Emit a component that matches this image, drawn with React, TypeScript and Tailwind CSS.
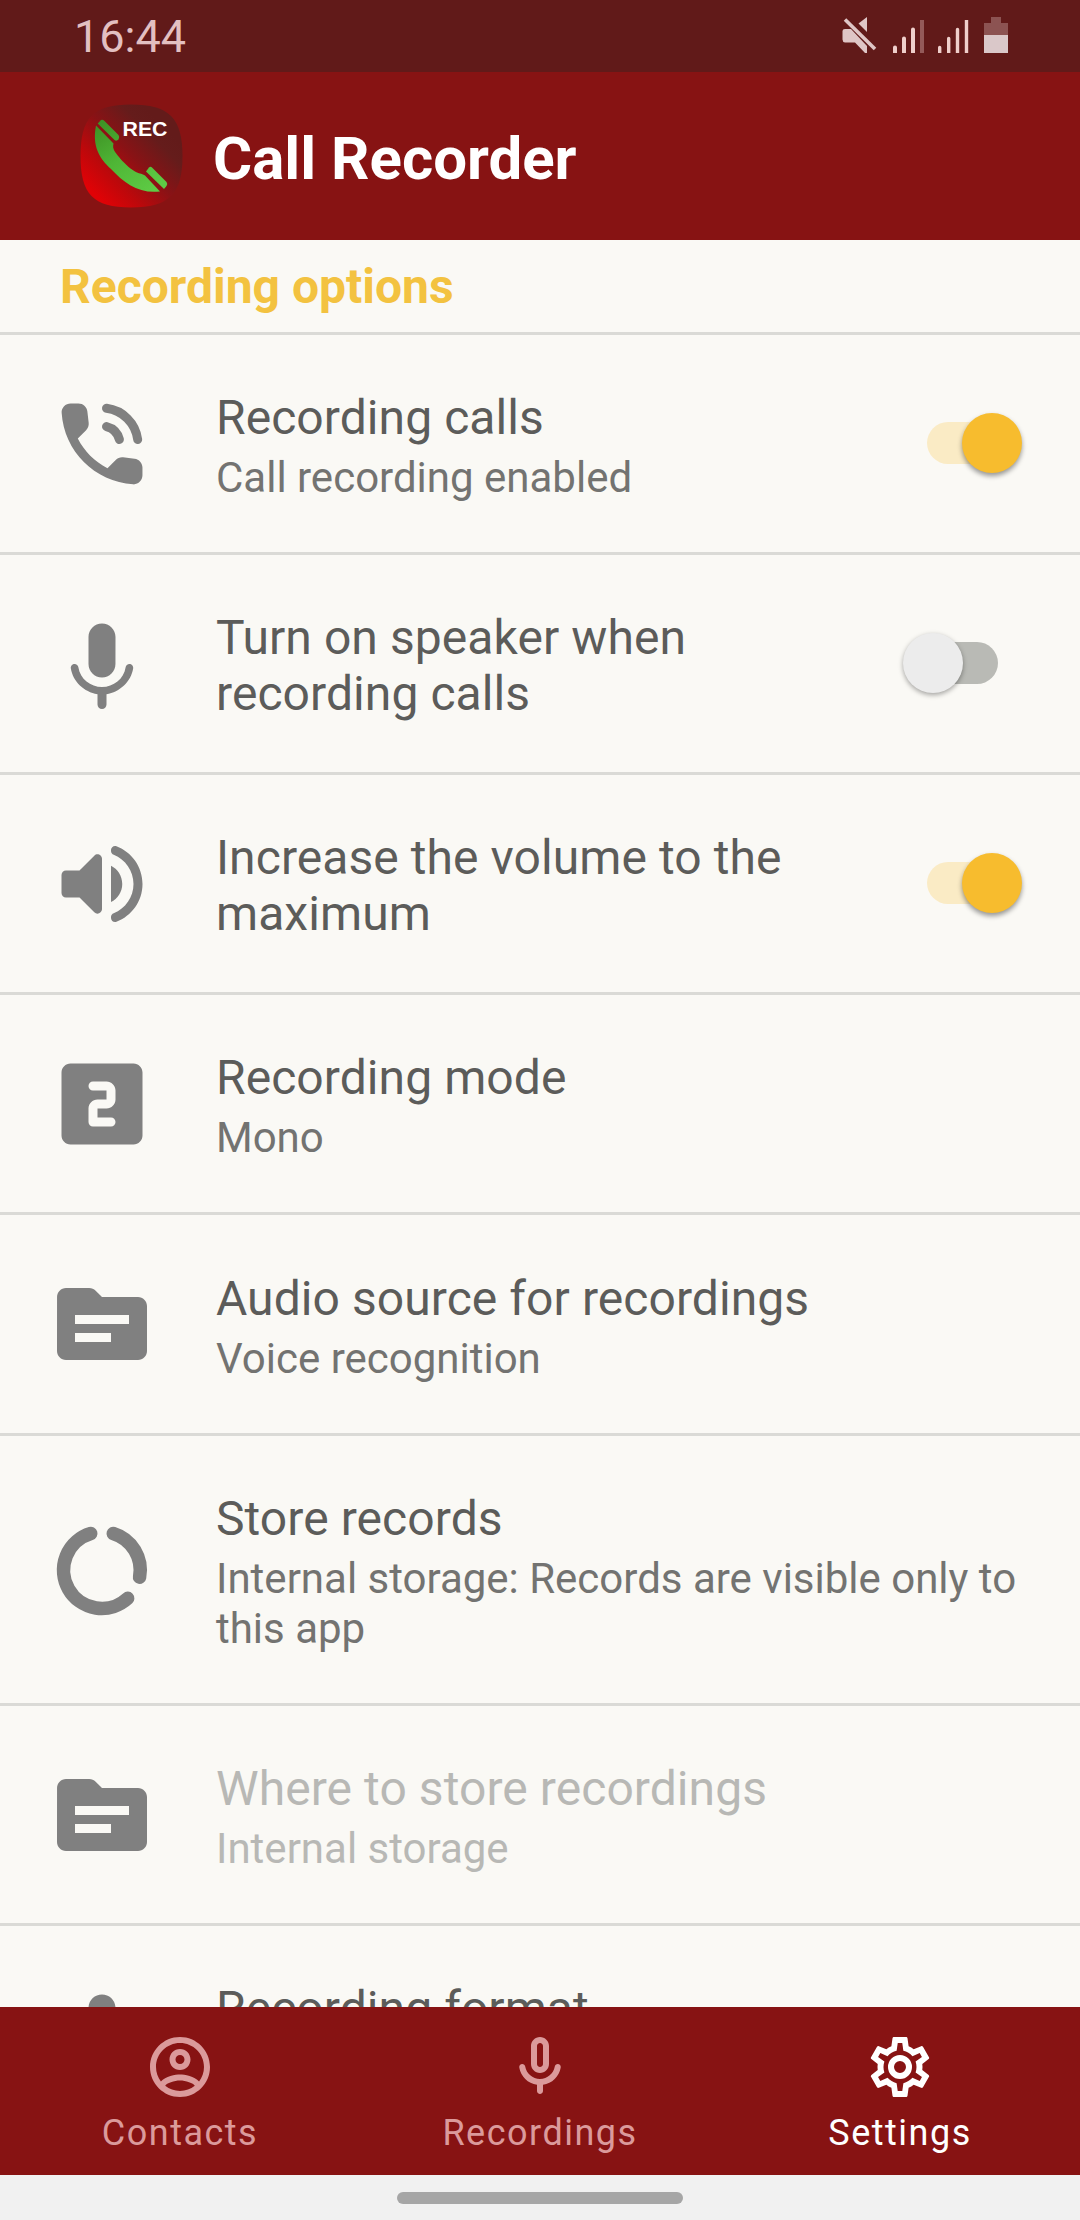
import React from "react";

type IconProps = { className?: string };

const GREY = "#808080";

function Glyph({ d, children }: { d?: string; children?: React.ReactNode }) {
  return (
    <svg viewBox="0 0 24 24" className="h-[108px] w-[108px]" fill={GREY}>
      {d && <path d={d} />}
      {children}
    </svg>
  );
}

const PhoneIcon = () => (
  <Glyph d="M19.23 15.26l-2.54-.29c-.61-.07-1.21.14-1.64.57l-1.84 1.84c-2.83-1.44-5.15-3.75-6.59-6.59l1.85-1.85c.43-.43.64-1.03.57-1.64l-.29-2.52c-.12-1.01-.97-1.77-1.99-1.77H5.03c-1.13 0-2.07.94-2 2.07.53 8.54 7.36 15.36 15.89 15.89 1.13.07 2.07-.87 2.07-2v-1.73c.01-1.01-.75-1.86-1.76-1.98z">
    <g fill="none" stroke={GREY} strokeWidth="2" strokeLinecap="round">
      <path d="M13 4.07A8 8 0 0 1 19.93 11" />
      <path d="M13 8.13A4 4 0 0 1 15.87 11" />
    </g>
  </Glyph>
);

const MicIcon = () => (
  <Glyph d="M12 15c1.66 0 2.99-1.34 2.99-3L15 6c0-1.66-1.34-3-3-3S9 4.34 9 6v6c0 1.66 1.34 3 3 3zm6.08-3c-.42 0-.77.3-.83.71-.37 2.61-2.72 4.39-5.25 4.39s-4.88-1.77-5.25-4.39c-.06-.41-.41-.71-.83-.71-.52 0-.92.46-.85.97.46 2.97 2.96 5.3 5.93 5.75V21c0 .55.45 1 1 1s1-.45 1-1v-2.28c2.96-.43 5.47-2.78 5.93-5.75.07-.51-.33-.97-.85-.97z" />
);

const VolumeIcon = () => (
  <Glyph d="M3 10v4c0 .55.45 1 1 1h3l3.29 3.29c.63.63 1.71.18 1.71-.71V6.41c0-.89-1.08-1.34-1.71-.71L7 9H4c-.55 0-1 .45-1 1zm13.5 2c0-1.77-1.02-3.29-2.5-4.03v8.05c1.48-.73 2.5-2.25 2.5-4.02zM14 4.45v.2c0 .38.25.71.6.85C17.18 6.53 19 9.06 19 12s-1.82 5.47-4.4 6.5c-.36.14-.6.47-.6.85v.2c0 .63.63 1.07 1.21.85C18.6 19.11 21 15.84 21 12s-2.4-7.11-5.79-8.4c-.58-.23-1.21.22-1.21.85z" />
);

const TwoIcon = () => (
  <Glyph d="M19 3H5c-1.1 0-2 .9-2 2v14c0 1.1.9 2 2 2h14c1.1 0 2-.9 2-2V5c0-1.1-.9-2-2-2zm-4 8c0 1.11-.9 2-2 2h-2v2h3c.55 0 1 .45 1 1s-.45 1-1 1h-4c-.55 0-1-.45-1-1v-3c0-1.11.9-2 2-2h2V9h-3c-.55 0-1-.45-1-1s.45-1 1-1h3c1.1 0 2 .89 2 2v2z" />
);

const FolderIcon = () => (
  <Glyph d="M20 6h-8l-1.41-1.41C10.21 4.21 9.7 4 9.17 4H4c-1.1 0-1.99.9-1.99 2L2 18c0 1.1.9 2 2 2h16c1.1 0 2-.9 2-2V8c0-1.1-.9-2-2-2zm-6 10H6v-2h8v2zm4-4H6v-2h12v2z" />
);

const UsageIcon = () => (
  <Glyph>
    <g fill="none" stroke={GREY} strokeWidth="3" strokeLinecap="round">
      <path d="M14.5 3.9A8.5 8.5 0 0 1 20.35 13.6" />
      <path d="M9.5 3.9A8.5 8.5 0 1 0 17.7 18.3" />
    </g>
  </Glyph>
);

function ContactIcon({ className }: IconProps) {
  return (
    <svg viewBox="0 0 24 24" className={className} fill="currentColor" fillRule="evenodd">
      <path d="M7.07 18.28C7.5 17.38 10.12 16.5 12 16.5s4.5.88 4.93 1.78C15.57 19.36 13.86 20 12 20s-3.57-.64-4.93-1.72zM18.36 16.83C16.93 15.09 13.46 14.5 12 14.5s-4.93.59-6.36 2.33C4.62 15.5 4 13.82 4 12c0-4.41 3.59-8 8-8s8 3.59 8 8c0 1.820-.62 3.500-1.640 4.830zM12 2C6.480 2 2 6.480 2 12s4.480 10 10 10 10-4.480 10-10S17.520 2 12 2z" />
      <path d="M12 6c-1.940 0-3.500 1.560-3.500 3.500S10.060 13 12 13s3.500-1.560 3.500-3.500S13.940 6 12 6zm0 5a1.500 1.500 0 1 1 0-3 1.500 1.500 0 0 1 0 3z" />
    </svg>
  );
}

function MicOutlineIcon({ className }: IconProps) {
  return (
    <svg viewBox="0 0 24 24" className={className} fill="currentColor">
      <path d="M12 14c1.66 0 3-1.34 3-3V5c0-1.66-1.34-3-3-3S9 3.34 9 5v6c0 1.66 1.34 3 3 3zm-1-9c0-.55.45-1 1-1s1 .45 1 1v6c0 .55-.45 1-1 1s-1-.45-1-1V5zm6.91 6c-.49 0-.9.36-.98.85C16.52 14.2 14.47 16 12 16s-4.52-1.8-4.93-4.15c-.08-.49-.49-.85-.98-.85-.61 0-1.09.54-1 1.14.49 3 2.89 5.35 5.91 5.78V20c0 .55.45 1 1 1s1-.45 1-1v-2.08c3.02-.43 5.42-2.78 5.91-5.78.1-.6-.39-1.14-1-1.14z" />
    </svg>
  );
}

function GearIcon({ className }: IconProps) {
  return (
    <svg viewBox="0 0 24 24" className={className} fill="currentColor" fillRule="evenodd">
      <path d="M12 8a4 4 0 1 1 0 8 4 4 0 0 1 0-8m0 2a2 2 0 1 0 0 4 2 2 0 0 0 0-4" />
      <path d="M10 22C9.75 22 9.54 21.82 9.5 21.58L9.13 18.93C8.5 18.68 7.96 18.34 7.44 17.94L4.95 18.95C4.73 19.03 4.46 18.95 4.34 18.73L2.34 15.27C2.21 15.05 2.27 14.78 2.46 14.63L4.57 12.97L4.5 12L4.57 11L2.46 9.37C2.27 9.22 2.21 8.95 2.34 8.73L4.34 5.27C4.46 5.05 4.73 4.96 4.95 5.05L7.44 6.05C7.96 5.66 8.5 5.32 9.13 5.07L9.5 2.42C9.54 2.18 9.75 2 10 2H14C14.25 2 14.46 2.18 14.5 2.42L14.87 5.07C15.5 5.32 16.04 5.66 16.56 6.05L19.05 5.05C19.27 4.96 19.54 5.05 19.66 5.27L21.66 8.73C21.79 8.95 21.73 9.22 21.54 9.37L19.43 11L19.5 12L19.43 13L21.54 14.63C21.73 14.78 21.79 15.05 21.66 15.27L19.66 18.73C19.54 18.95 19.27 19.04 19.05 18.95L16.56 17.95C16.04 18.34 15.5 18.68 14.87 18.93L14.5 21.58C14.46 21.82 14.25 22 14 22H10M11.25 4L10.88 6.61C9.68 6.86 8.62 7.5 7.85 8.39L5.44 7.35L4.69 8.65L6.8 10.2C6.4 11.37 6.4 12.64 6.8 13.8L4.68 15.36L5.43 16.66L7.86 15.62C8.63 16.5 9.68 17.14 10.87 17.38L11.24 20H12.76L13.13 17.39C14.32 17.14 15.37 16.5 16.14 15.62L18.57 16.66L19.32 15.36L17.2 13.81C17.6 12.64 17.6 11.37 17.2 10.2L19.31 8.65L18.56 7.35L16.15 8.39C15.38 7.5 14.32 6.86 13.12 6.62L12.75 4H11.25Z" />
    </svg>
  );
}

function AppLogo() {
  return (
    <svg viewBox="0 0 104 104" className="ml-[79px] h-[104px] w-[104px]">
      <defs>
        <linearGradient id="bg" x1="0.15" y1="0.88" x2="0.82" y2="0.22">
          <stop offset="0" stopColor="#e00206" />
          <stop offset="0.25" stopColor="#bd080b" />
          <stop offset="0.55" stopColor="#8a1215" />
          <stop offset="0.85" stopColor="#651c1b" />
          <stop offset="1" stopColor="#631b1a" />
        </linearGradient>
        <linearGradient id="phone" gradientUnits="userSpaceOnUse" x1="20" y1="16" x2="72" y2="88">
          <stop offset="0" stopColor="#3d8f24" />
          <stop offset="0.5" stopColor="#4fb636" />
          <stop offset="1" stopColor="#5ecb45" />
        </linearGradient>
      </defs>
      <path
        d="M52 0.5C90 0.5 103.500 14 103.500 52S90 103.500 52 103.500S1.500 90 1.500 52S14 0.500 52 0.500z"
        fill="url(#bg)"
      />
      <g fill="url(#phone)">
        <path d="M17 21.500C13 42 20 54 32 65C45 79 60 90 81 87.500L66 71.500C62 69 60 70 56 67.500C50 64 44 58 40 53C36 48 33 45 34.500 39.500Z" />
        <path d="M18.700 19.500L22 16Q23.500 15 25.500 17L39.500 31Q41 33 39.500 35.500Q37.500 37.500 35.500 36Z" />
        <path d="M67 67.500L70 63.500Q71.500 62 73.500 64L87.500 78Q89 80 87.500 82L85 85Z" />
      </g>
      <text
        x="43.500"
        y="31.500"
        fontFamily="Liberation Sans, sans-serif"
        fontWeight="700"
        fontSize="21"
        textLength="45"
        lengthAdjust="spacingAndGlyphs"
        fill="#fff"
      >
        REC
      </text>
    </svg>
  );
}

function StatusBar() {
  return (
    <div className="flex h-[72px] shrink-0 items-center justify-between bg-[#611a19] pl-[74px]">
      <span className="pt-px text-[45px] leading-[72px] text-[#e3c0c1]">16:44</span>
      <svg viewBox="0 0 280 72" className="h-[72px] w-[280px]" fill="#dfc6c6">
        <path d="M42.500 31Q42.500 29 45 29H51L67 46V53H65L55 42.500H45Q42.500 42 42.500 39.500Z" />
        <path d="M67 17V32L58.500 23.500Z" />
        <path d="M45 19.500L75 49" stroke="#dfc6c6" strokeWidth="3.600" />
        <path
          d="M93 53V47.500a2 2 0 0 1 4 0V53zM102 53V38.500a2 2 0 0 1 4 0V53zM111 53V29.500a2 2 0 0 1 4 0V53z"
          fill="#efcfcb"
        />
        <path d="M120 20h4v33h-4z" fill="#945a59" />
        <path
          d="M138 53V47.500a1.700 1.700 0 0 1 3.400 0V53zM147 53V38.500a1.700 1.700 0 0 1 3.400 0V53zM155.800 53V29.500a1.700 1.700 0 0 1 3.400 0V53zM164.800 20h3.400v33h-3.400z"
          fill="#efcfcb"
        />
        <path d="M191 17h10v6h7v12h-24V23h7z" fill="#8c5352" />
        <path d="M184 35h24v18h-24z" fill="#dac8c9" />
      </svg>
    </div>
  );
}

function Toggle({ on }: { on: boolean }) {
  return (
    <div className="relative mr-[57px] ml-[24px] h-[63px] w-[120px] shrink-0">
      <div
        className={
          on
            ? "absolute top-[10px] left-[24px] h-[42px] w-[71px] rounded-full bg-[#faebc5]"
            : "absolute top-[10px] left-[24px] h-[42px] w-[71px] rounded-full bg-[#b9bab5]"
        }
      />
      <div
        className={
          on
            ? "absolute top-px left-[59px] h-[60px] w-[60px] rounded-full bg-[#f7bc2e] shadow-[0_3px_5px_rgba(0,0,0,0.4)]"
            : "absolute top-px left-0 h-[60px] w-[60px] rounded-full bg-[#ececec] shadow-[0_2px_5px_rgba(0,0,0,0.35)]"
        }
      />
    </div>
  );
}

type Row = {
  icon: React.ReactNode;
  title: string;
  sub?: string;
  toggle?: boolean;
  disabled?: boolean;
  height?: string;
};

const rows: Row[] = [
  { icon: <PhoneIcon />, title: "Recording calls", sub: "Call recording enabled", toggle: true },
  { icon: <MicIcon />, title: "Turn on speaker when recording calls", toggle: false },
  { icon: <VolumeIcon />, title: "Increase the volume to the maximum", toggle: true },
  { icon: <TwoIcon />, title: "Recording mode", sub: "Mono" },
  {
    icon: <FolderIcon />,
    title: "Audio source for recordings",
    sub: "Voice recognition",
    height: "h-[221px]",
  },
  {
    icon: <UsageIcon />,
    title: "Store records",
    sub: "Internal storage: Records are visible only to this app",
    height: "h-[270px]",
  },
  { icon: <FolderIcon />, title: "Where to store recordings", sub: "Internal storage", disabled: true },
  { icon: <MicIcon />, title: "Recording format", sub: "MP3" },
];

function SettingRow({ row }: { row: Row }) {
  return (
    <div
      className={`flex shrink-0 items-center border-b-[3px] border-[#dadad6] pl-[48px] ${
        row.height ?? "h-[220px]"
      }`}
    >
      <div className="mr-[60px] shrink-0">{row.icon}</div>
      <div
        className={`min-w-0 flex-1 ${row.sub ? "pt-[6px]" : "pt-[4px]"} ${
          row.disabled ? "text-[#b8b8b5]" : "text-[#5c5c5a]"
        }`}
      >
        <div className="text-[48px] leading-[56px] tracking-[0.07px]">{row.title}</div>
        {row.sub && (
          <div
            className={`mt-[7px] text-[42px] leading-[50px] ${
              row.disabled ? "text-[#b8b8b5]" : "text-[#737371]"
            }`}
          >
            {row.sub}
          </div>
        )}
      </div>
      {row.toggle !== undefined && <Toggle on={row.toggle} />}
    </div>
  );
}

const tabs = [
  { label: "Contacts", Icon: ContactIcon, color: "text-[#db9a9b]" },
  { label: "Recordings", Icon: MicOutlineIcon, color: "text-[#db9a9b]" },
  { label: "Settings", Icon: GearIcon, color: "text-white" },
];

export default function App() {
  return (
    <div className="flex h-[2220px] w-[1080px] flex-col overflow-hidden bg-[#faf9f5] font-[Roboto,sans-serif]">
      <StatusBar />
      <header className="flex h-[168px] shrink-0 items-center bg-[#871313]">
        <AppLogo />
        <h1 className="ml-[30px] pt-[5px] text-[60px] leading-[70px] font-bold text-white">Call Recorder</h1>
      </header>
      <main className="flex min-h-0 flex-1 flex-col overflow-hidden">
        <h2 className="h-[95px] shrink-0 border-b-[3px] border-[#dadad6] pl-[60px] text-[48px] leading-[94px] font-bold text-[#f3c240]">
          Recording options
        </h2>
        {rows.map((row) => (
          <SettingRow key={row.title} row={row} />
        ))}
      </main>
      <nav className="grid h-[168px] shrink-0 grid-cols-3 bg-[#871313]">
        {tabs.map(({ label, Icon, color }) => (
          <div key={label} className={`flex flex-col items-center pt-[24px] ${color}`}>
            <Icon className="h-[72px] w-[72px]" />
            <span className="mt-[9px] text-[36px] leading-[42px] tracking-[1.5px]">{label}</span>
          </div>
        ))}
      </nav>
      <div className="flex h-[45px] shrink-0 justify-center bg-[#f1f1f1] pt-[17px]">
        <div className="h-[12px] w-[286px] rounded-full bg-[#a6a6a6]" />
      </div>
    </div>
  );
}
